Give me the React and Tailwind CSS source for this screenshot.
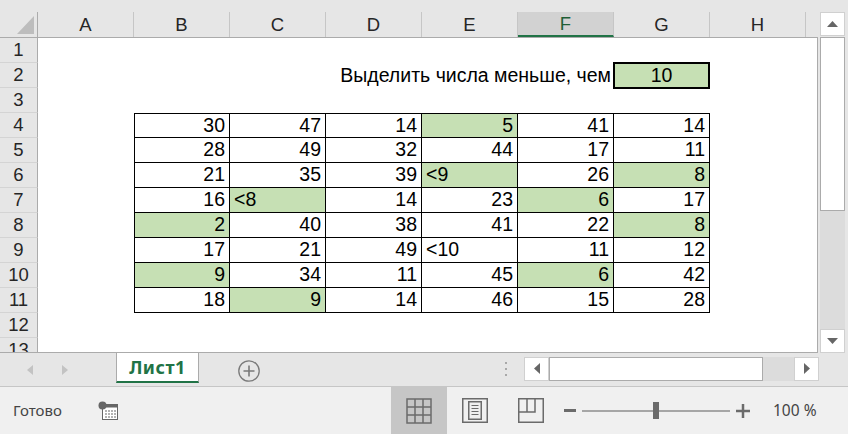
import React from 'react';
import clsx from 'clsx';

const cols = ['A', 'B', 'C', 'D', 'E', 'F', 'G', 'H'];

// "*" = green fill, leading "<" = text aligned left
const table = [
  ['30', '47', '14', '5*', '41', '14'],
  ['28', '49', '32', '44', '17', '11'],
  ['21', '35', '39', '<9*', '26', '8*'],
  ['16', '<8*', '14', '23', '6*', '17'],
  ['2*', '40', '38', '41', '22', '8*'],
  ['17', '21', '49', '<10', '11', '12'],
  ['9*', '34', '11', '45', '6*', '42'],
  ['18', '9*', '14', '46', '15', '28'],
];

function RowHead({ n }) {
  return (
    <div className="w-[38px] shrink-0 h-full flex items-center justify-center bg-[#e6e6e6] border-r border-b border-r-[#ababab] border-b-[#d4d4d4] text-[18.5px] text-[#262626]">
      {n}
    </div>
  );
}

function DataCell({ raw, first, top }) {
  const green = raw.endsWith('*');
  const left = raw.startsWith('<');
  const v = raw.replace('*', '');
  return (
    <div
      className={clsx(
        'w-[96px] shrink-0 h-full flex items-center border-black border-r border-b',
        first && 'border-l',
        top && 'border-t',
        green && 'bg-[#c6e0b4]',
        left ? 'justify-start pl-[4px]' : 'justify-end pr-[4px]'
      )}
    >
      {v}
    </div>
  );
}

function Row({ n, children }) {
  return (
    <div className="flex h-[25px] shrink-0">
      <RowHead n={n} />
      {children}
    </div>
  );
}

function MacroIcon() {
  return (
    <svg width="20" height="20" viewBox="0 0 20 20">
      <rect x="4.5" y="3.5" width="15" height="15" fill="#fff" stroke="#666" />
      <rect x="4" y="3" width="16" height="3.5" fill="#666" />
      <circle cx="4.5" cy="4.5" r="4" fill="#666" />
      {[9.5, 12.5, 15.5].map((y) =>
        [7, 10, 13, 16].map((x) => <rect key={x + '-' + y} x={x} y={y} width="2" height="1" fill="#666" />)
      )}
    </svg>
  );
}

export default function App() {
  return (
    <div className="w-[848px] h-[434px] flex flex-col bg-[#e6e6e6] overflow-hidden font-['Liberation_Sans',Arial,sans-serif] text-black">
      {/* sheet area */}
      <div className="flex h-[353px] shrink-0">
        <div className="w-[818px] flex flex-col">
          <div className="h-[12px] shrink-0" />
          {/* column headers */}
          <div className="h-[26px] shrink-0 flex border-b border-[#ababab] text-[18.5px] text-[#262626]">
            <div className="w-[38px] shrink-0 border-r border-[#ababab] flex items-end justify-end pr-[3px] pb-[3px]">
              <svg width="17" height="18" viewBox="0 0 17 18">
                <polygon points="17,0 17,18 0,18" fill="#bdbdbd" />
              </svg>
            </div>
            {cols.map((c) => (
              <div
                key={c}
                className={clsx(
                  'w-[96px] shrink-0 flex items-center justify-center border-r border-[#c6c6c6]',
                  c === 'F' && 'bg-[#d2d2d2] text-[#1e5e36] border-b-2 border-b-[#217346]'
                )}
              >
                {c}
              </div>
            ))}
          </div>
          {/* rows */}
          <div className="h-[315px] flex flex-col bg-white border-r border-b border-[#ababab] overflow-hidden text-[19.5px]">
            <Row n={1}>
              <div className="flex-1" />
            </Row>
            <Row n={2}>
              <div className="w-[576px] shrink-0 flex items-center justify-end pr-[3px] whitespace-nowrap">
                Выделить числа меньше, чем
              </div>
              <div className="w-[97px] h-[27px] -mt-[1px] -ml-[1px] shrink-0 flex items-center justify-center border-2 border-black bg-[#c6e0b4]">
                10
              </div>
              <div className="flex-1" />
            </Row>
            <Row n={3}>
              <div className="flex-1" />
            </Row>
            {table.map((r, i) => (
              <Row key={i} n={i + 4}>
                <div className="w-[96px] shrink-0" />
                {r.map((raw, j) => (
                  <DataCell key={j} raw={raw} first={j === 0} top={i === 0} />
                ))}
                <div className="flex-1" />
              </Row>
            ))}
            <Row n={12}>
              <div className="flex-1" />
            </Row>
            <Row n={13}>
              <div className="flex-1" />
            </Row>
          </div>
        </div>
        {/* vertical scrollbar */}
        <div className="w-[30px] flex flex-col pt-[12px]">
          <div className="ml-[2px] w-[25px] h-[24px] shrink-0 bg-white border border-[#d0d0d0] flex items-center justify-center">
            <svg width="11" height="6" viewBox="0 0 11 6">
              <polygon points="0,6 5.5,0 11,6" fill="#666" />
            </svg>
          </div>
          <div className="ml-[2px] w-[25px] mt-[1px] flex-1 flex flex-col bg-[#dcdcdc]">
            <div className="h-[174px] bg-white border border-[#ababab]" />
          </div>
          <div className="ml-[2px] w-[25px] h-[24px] shrink-0 bg-white border border-[#d0d0d0] flex items-center justify-center">
            <svg width="11" height="6" viewBox="0 0 11 6">
              <polygon points="0,0 11,0 5.5,6" fill="#666" />
            </svg>
          </div>
        </div>
      </div>

      {/* sheet tabs bar */}
      <div className="h-[34px] shrink-0 flex items-center border-b border-[#c6c6c6] font-['Noto_Sans',sans-serif]">
        <svg className="ml-[27px]" width="6" height="10" viewBox="0 0 6 10">
          <polygon points="6,0 0,5 6,10" fill="#c3c3c3" />
        </svg>
        <svg className="ml-[29px]" width="6" height="10" viewBox="0 0 6 10">
          <polygon points="0,0 6,5 0,10" fill="#c3c3c3" />
        </svg>
        <div className="ml-[48px] self-start w-[83px] h-[30px] bg-white border-x border-[#ababab] border-b-2 border-b-[#217346] flex items-center justify-center text-[18px] font-bold text-[#217346] tracking-[0.5px]">
          Лист1
        </div>
        <svg className="ml-[39px] mt-[2px]" width="22" height="22" viewBox="0 0 22 22">
          <circle cx="11" cy="11" r="10.2" fill="none" stroke="#7a7a7a" strokeWidth="1.3" />
          <path d="M11 5.5V16.5M5.5 11H16.5" stroke="#7a7a7a" strokeWidth="1.6" />
        </svg>
        <div className="ml-[245px] w-[2px] flex flex-col gap-[4px] -mt-[2px]">
          <div className="h-[2px] bg-[#a8a8a8]" />
          <div className="h-[2px] bg-[#a8a8a8]" />
          <div className="h-[2px] bg-[#a8a8a8]" />
        </div>
        <div className="ml-[17px] w-[295px] h-[24px] -mt-[2px] flex bg-[#dcdcdc]">
          <div className="w-[25px] bg-white border border-[#d0d0d0] flex items-center justify-center">
            <svg width="6" height="11" viewBox="0 0 6 11">
              <polygon points="6,0 0,5.5 6,11" fill="#666" />
            </svg>
          </div>
          <div className="w-[214px] bg-white border border-[#ababab]" />
          <div className="flex-1" />
          <div className="w-[25px] bg-white border border-[#d0d0d0] flex items-center justify-center">
            <svg width="6" height="11" viewBox="0 0 6 11">
              <polygon points="0,0 6,5.5 0,11" fill="#666" />
            </svg>
          </div>
        </div>
      </div>

      {/* status bar */}
      <div className="flex-1 flex items-center bg-[#f0f0f0] font-['Noto_Sans',sans-serif] text-[15px] text-[#444]">
        <div className="w-[85px] ml-[13px]">Готово</div>
        <MacroIcon />
        <div className="ml-[273px] w-[56px] h-full bg-[#c6c6c6] flex items-center justify-center">
          <svg width="26" height="26" viewBox="0 0 26 26">
            <rect x="1" y="1" width="24" height="24" fill="none" stroke="#6b6b6b" strokeWidth="1.5" />
            <path d="M9 1V25M17 1V25M1 9H25M1 17H25" stroke="#6b6b6b" strokeWidth="1.5" />
          </svg>
        </div>
        <svg className="ml-[15px]" width="26" height="25" viewBox="0 0 26 25">
          <rect x="0.75" y="0.75" width="24.5" height="23.5" fill="none" stroke="#6b6b6b" strokeWidth="1.5" />
          <rect x="6.75" y="3.75" width="12.5" height="17.5" fill="none" stroke="#6b6b6b" strokeWidth="1.5" />
          <path d="M9.5 7.5H16.5M9.5 10.5H16.5M9.5 13.5H16.5M9.5 16.5H16.5" stroke="#6b6b6b" strokeWidth="1" />
        </svg>
        <svg className="ml-[30px]" width="26" height="25" viewBox="0 0 26 25">
          <rect x="0.75" y="0.75" width="24.5" height="23.5" fill="none" stroke="#6b6b6b" strokeWidth="1.5" />
          <path d="M9 1V14M17 1V14M1 14H17.75" stroke="#6b6b6b" strokeWidth="1.5" />
        </svg>
        <div className="ml-[20px] w-[12px] h-[3px] bg-[#6b6b6b]" />
        <div className="ml-[6px] w-[148px] h-[2px] bg-[#a6a6a6] relative">
          <div className="absolute left-[71px] -top-[8px] w-[6px] h-[17px] bg-[#6b6b6b]" />
        </div>
        <svg className="ml-[6px]" width="14" height="14" viewBox="0 0 14 14">
          <path d="M7 0V14M0 7H14" stroke="#6b6b6b" strokeWidth="2.5" />
        </svg>
        <div className="ml-[23px] text-[15.5px]">100 %</div>
      </div>
    </div>
  );
}
